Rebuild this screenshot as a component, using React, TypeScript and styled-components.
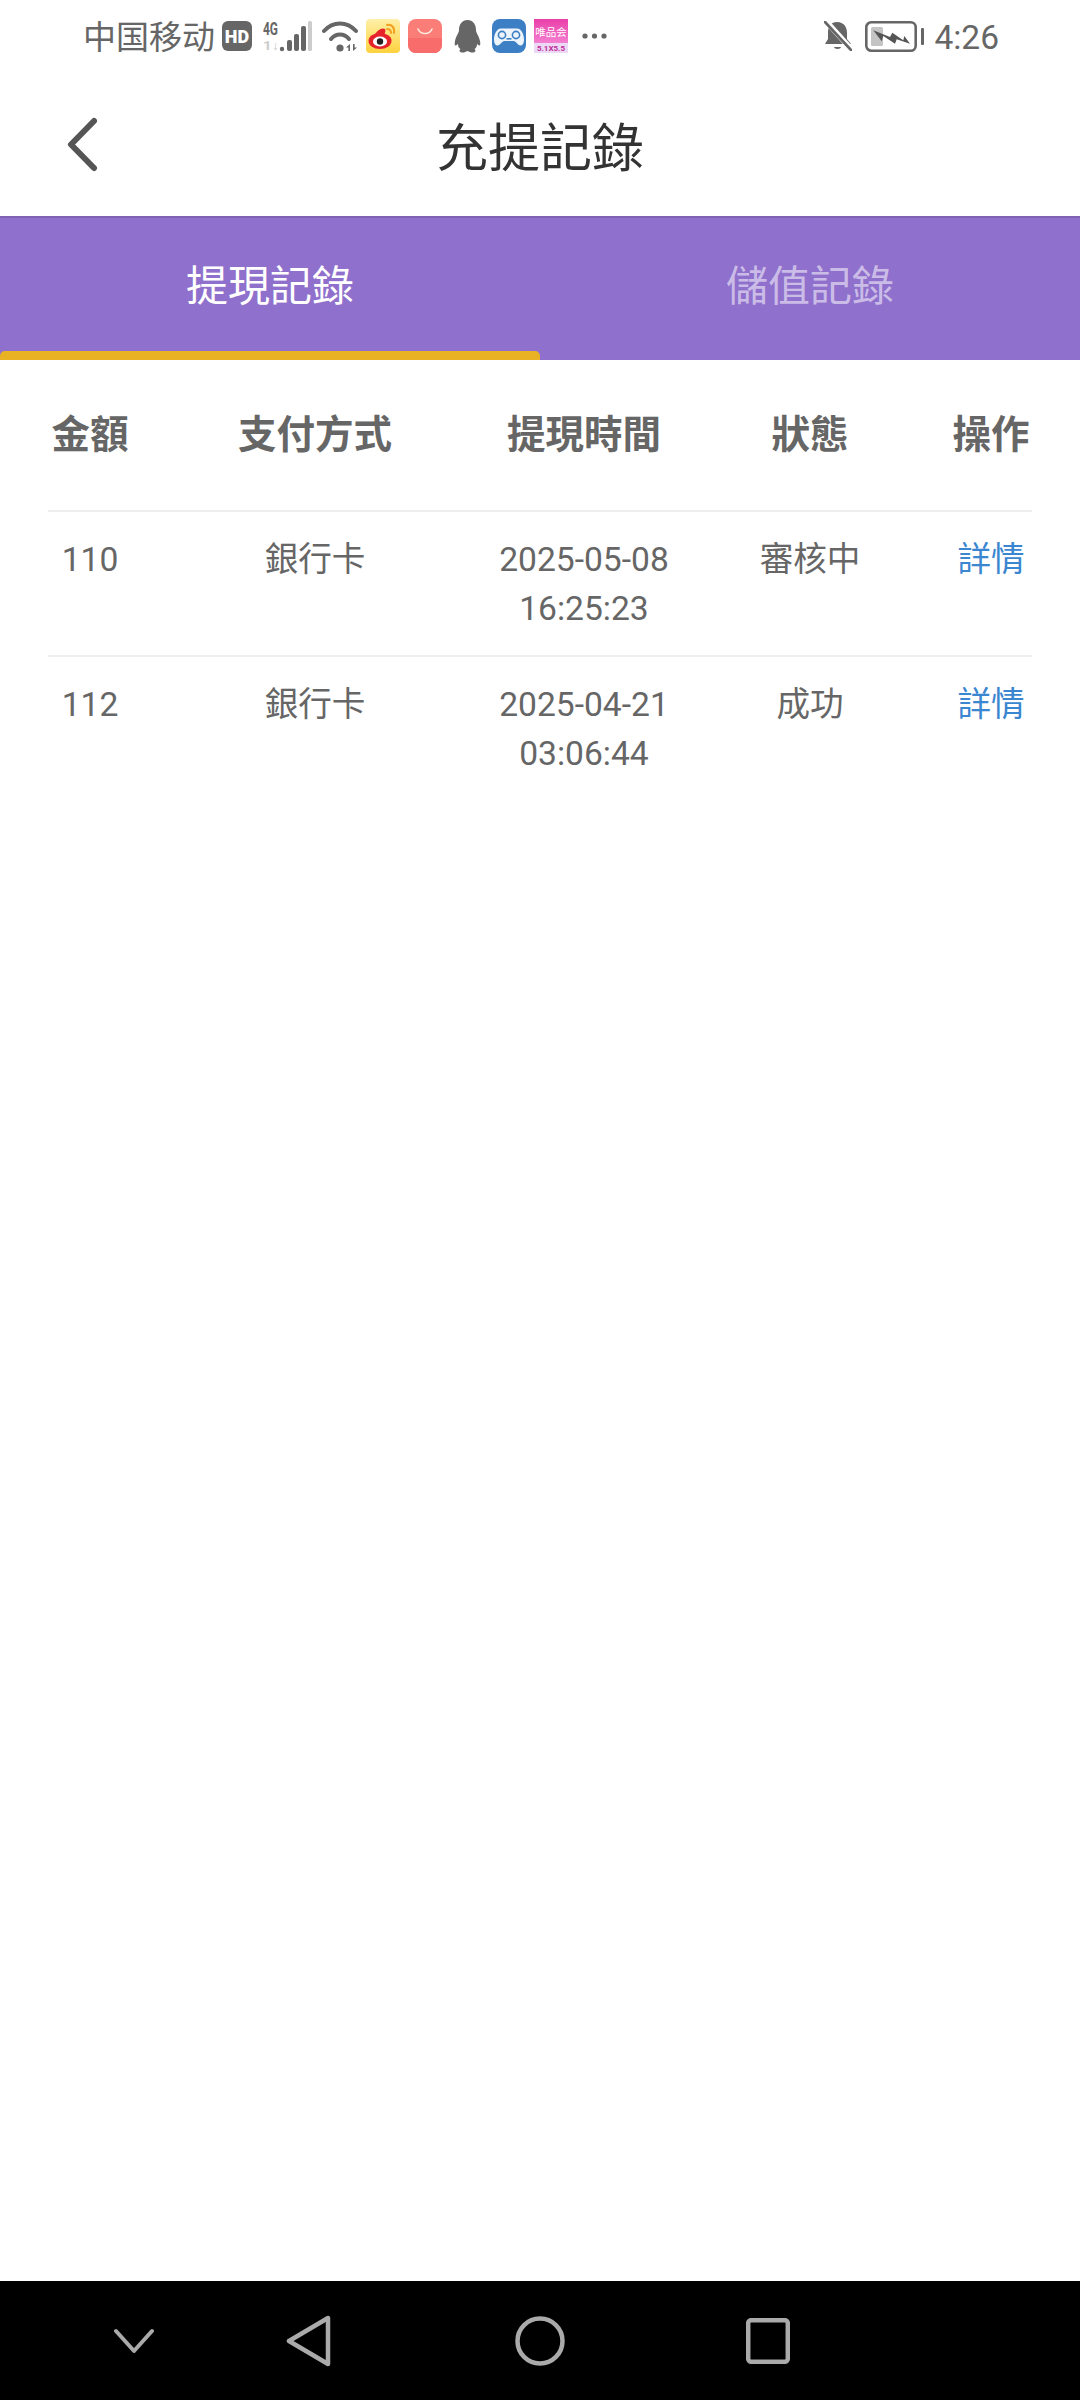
import React from 'react';
import styled, { createGlobalStyle } from 'styled-components';

const GlobalStyle = createGlobalStyle`
  html, body {
    margin: 0;
    padding: 0;
    background: #fff;
  }
  body {
    font-family: Roboto, 'Noto Sans CJK TC', sans-serif;
  }
`;

const Page = styled.div`
  display: flex;
  flex-direction: column;
  width: 1080px;
  height: 2400px;
  overflow: hidden;
  background: #fff;
`;

const StatusBar = styled.div`
  display: flex;
  align-items: center;
  justify-content: space-between;
  flex: none;
  box-sizing: border-box;
  height: 76px;
  padding: 0 81px 4px 83px;
  color: #666;
`;

const StatusGroup = styled.div`
  display: flex;
  align-items: center;
`;

const Carrier = styled.span`
  font-size: 33px;
  line-height: 40px;
  margin: 4px 7px 0 0;
`;

const Clock = styled.span`
  font-size: 33.5px;
  line-height: 40px;
  margin: 4px 0 0 10px;
`;

const Glyph = styled.svg<{ $gap?: number }>`
  display: block;
  flex: none;
  margin-left: ${({ $gap }) => $gap ?? 0}px;
`;

const Header = styled.header`
  display: flex;
  align-items: center;
  justify-content: center;
  position: relative;
  flex: none;
  box-sizing: border-box;
  height: 140px;
  padding-bottom: 4px;
`;

const BackButton = styled.button`
  position: absolute;
  left: 62px;
  top: 41px;
  padding: 0;
  border: 0;
  background: none;
`;

const Title = styled.h1`
  margin: 0;
  font-size: 52px;
  font-weight: 400;
  color: #333;
`;

const Tabs = styled.nav`
  display: flex;
  flex: none;
  height: 144px;
  background: #8f70cc;
  box-shadow: inset 0 2px 0 #7f64b4;
`;

const Tab = styled.div<{ $active?: boolean }>`
  display: flex;
  align-items: center;
  justify-content: center;
  position: relative;
  flex: 1;
  padding-bottom: 12px;
  font-size: 42px;
  color: ${({ $active }) => ($active ? '#fff' : 'rgba(255, 255, 255, 0.55)')};

  ${({ $active }) =>
    $active &&
    `
    &::after {
      content: '';
      position: absolute;
      left: 0;
      right: 0;
      bottom: 0;
      height: 9px;
      border-radius: 5px 5px 0 0;
      background: #e9b225;
    }
  `}
`;

const Table = styled.section`
  flex: 1;
  padding: 0 48px;
`;

const Row = styled.div`
  display: grid;
  grid-template-columns: 84px 366px 172px 280px 82px;
  border-bottom: 2px solid #eee;

  &:last-child {
    border-bottom: 0;
  }
`;

const HeadRow = styled(Row)`
  height: 152px;
  align-items: center;
  padding-bottom: 9px;
  box-sizing: border-box;
`;

const BodyRow = styled(Row)`
  height: 145px;
  box-sizing: border-box;
  padding-top: 23px;
`;

const HeadCell = styled.div`
  font-size: 38.5px;
  font-weight: 700;
  text-align: center;
  white-space: nowrap;
  color: #666;
`;

const Cell = styled.div<{ $link?: boolean }>`
  font-size: 33.6px;
  line-height: 49px;
  text-align: center;
  white-space: nowrap;
  color: ${({ $link }) => ($link ? '#3a86d0' : '#666')};
`;

const NavBar = styled.footer`
  display: flex;
  align-items: center;
  flex: none;
  height: 119px;
  padding: 0 0 0 114px;
  background: #000;
`;

const HdIcon = () => (
  <Glyph width="30" height="30" viewBox="0 0 30 30">
    <rect width="30" height="30" rx="6" fill="#666" />
    <text x="15" y="21.5" fontFamily="Roboto" fontSize="18" fontWeight="900" fill="#fff" textAnchor="middle">
      HD
    </text>
  </Glyph>
);

const SignalIcon = () => (
  <Glyph width="49" height="38" viewBox="0 -4 49 38" $gap={11}>
    <text x="0" y="14" fontFamily="Roboto" fontSize="18" fontWeight="700" fill="#666" textLength="15" lengthAdjust="spacingAndGlyphs">
      4G
    </text>
    <text x="0" y="29" fontFamily="Roboto" fontSize="12" fontWeight="700" fill="#ccc" textLength="16" lengthAdjust="spacingAndGlyphs">
      1↓
    </text>
    <circle cx="19" cy="28" r="2.2" fill="#666" />
    <rect x="24" y="19" width="5" height="11" rx="2" fill="#666" />
    <rect x="31" y="13" width="5" height="17" rx="2" fill="#666" />
    <rect x="38" y="5" width="5" height="25" rx="2" fill="#666" />
    <rect x="45" y="0" width="4" height="30" rx="1.5" fill="#ccc" />
  </Glyph>
);

const WifiIcon = () => (
  <Glyph width="36" height="34" viewBox="0 0 36 34" $gap={10}>
    <g fill="none" stroke="#666" strokeWidth="4" strokeLinecap="round">
      <path d="M2 12C11 2 25 2 34 12" />
      <path d="M9 20C14 14 22 14 27 20" />
    </g>
    <circle cx="18" cy="29" r="3.6" fill="#666" />
    <path d="M28 25v7h-1.6v-3.5h-2.4zM31 32v-7h1.6v3.5h2.4z" fill="#666" />
  </Glyph>
);

const WeiboIcon = () => (
  <Glyph width="34" height="34" viewBox="0 0 34 34" $gap={8}>
    <defs>
      <linearGradient id="weiboBg" x1="0" y1="0" x2="0" y2="1">
        <stop offset="0" stopColor="#fff0a8" />
        <stop offset="1" stopColor="#fdd23e" />
      </linearGradient>
    </defs>
    <rect width="34" height="34" rx="4" fill="url(#weiboBg)" />
    <ellipse cx="14" cy="22" rx="11.5" ry="8" fill="#e6232b" />
    <path d="M8 17c3-6 8-9 11-7 1 2 0 4-1 6z" fill="#e6232b" />
    <path d="M20 18c3-1 6 0 5 4l-5 2z" fill="#e6232b" />
    <ellipse cx="14" cy="22.5" rx="7" ry="5" fill="#fff" />
    <circle cx="14" cy="22.5" r="3.2" fill="#222" />
    <path d="M21 6c5-1 8 3 7 8M21 10c3 0 4 2 4 4" fill="none" stroke="#f2a020" strokeWidth="2" strokeLinecap="round" />
  </Glyph>
);

const BagIcon = () => (
  <Glyph width="34" height="34" viewBox="0 0 34 34" $gap={8}>
    <rect width="34" height="34" rx="8" fill="#fb7d78" />
    <path d="M0 19h34v7a8 8 0 0 1-8 8H8a8 8 0 0 1-8-8z" fill="#f96c6c" />
    <path d="M10 10c2.5 6 11.5 6 14 0" fill="none" stroke="#ffe9dc" strokeWidth="1.6" strokeLinecap="round" />
  </Glyph>
);

const PenguinIcon = () => (
  <Glyph width="29" height="33" viewBox="0 0 29 33" $gap={11}>
    <path
      d="M14.5 0c5.5 0 8.5 4.5 8.5 10 0 3 3 6 4 11 .6 3 .4 5-1 4.5l-2-1.500c0 3-1 4-2.500 5 1.500 1 1.500 3.500-2 3.500-2 0-3.500-.6-5-1.500-1.500.9-3 1.500-5 1.500-3.500 0-3.500-2.500-2-3.500C6 28 5 27 5 24l-2 1.500c-1.400.5-1.600-1.500-1-4.500 1-5 4-8 4-11C6 4.500 9 0 14.500 0z"
      fill="#666"
    />
  </Glyph>
);

const GamepadIcon = () => (
  <Glyph width="34" height="34" viewBox="0 0 34 34" $gap={10}>
    <rect width="34" height="34" rx="8" fill="#3d7fc4" />
    <path
      d="M9 9.5h16c4.500 0 7 6 7 11 0 4-1.500 6-3.500 6-3 0-4-4.500-7-4.500h-9c-3 0-4 4.500-7 4.500-2 0-3.500-2-3.500-6 0-5 2.500-11 7-11z"
      fill="#eef4fb"
    />
    <circle cx="10" cy="16" r="3.6" fill="none" stroke="#3d7fc4" strokeWidth="1.6" />
    <circle cx="24" cy="16" r="3.6" fill="none" stroke="#3d7fc4" strokeWidth="1.6" />
    <rect x="14.5" y="19" width="5" height="1.6" fill="#3d7fc4" />
  </Glyph>
);

const VipIcon = () => (
  <Glyph width="34" height="34" viewBox="0 0 34 34" $gap={8}>
    <defs>
      <linearGradient id="vipBg" x1="0" y1="0" x2="0" y2="1">
        <stop offset="0" stopColor="#e93fa8" />
        <stop offset="1" stopColor="#f47fd0" />
      </linearGradient>
    </defs>
    <rect width="34" height="24" fill="url(#vipBg)" />
    <rect y="24" width="34" height="10" fill="#ecd9f6" />
    <text x="17" y="17" fontFamily="'Noto Sans CJK SC'" fontSize="10.5" fill="#fff" textAnchor="middle">
      唯品会
    </text>
    <text x="17" y="32" fontFamily="Roboto" fontSize="8" fontWeight="700" fill="#c02a96" textAnchor="middle">
      5.1X5.5
    </text>
  </Glyph>
);

const MoreIcon = () => (
  <Glyph width="25" height="8" viewBox="0 0 25 8" $gap={14}>
    <circle cx="3" cy="4" r="2.6" fill="#666" />
    <circle cx="12.5" cy="4" r="2.6" fill="#666" />
    <circle cx="22" cy="4" r="2.6" fill="#666" />
  </Glyph>
);

const MutedBellIcon = () => (
  <Glyph width="28" height="30" viewBox="0 0 28 30">
    <path d="M13 1c7 0 10 5 10 11v6l4 5H1l3-5v-6c0-6 2-11 9-11z" fill="#666" />
    <path d="M10 26h7c0 2.5-7 2.5-7 0z" fill="#666" />
    <path d="M1 -1l26 29" stroke="#fff" strokeWidth="5.5" />
    <path d="M1 1l26 28" stroke="#666" strokeWidth="2.6" strokeLinecap="round" />
  </Glyph>
);

const BatteryIcon = () => (
  <Glyph width="59" height="31" viewBox="0 0 59 31" $gap={13}>
    <rect x="1.3" y="1.3" width="49.4" height="28.4" rx="5" fill="none" stroke="#666" strokeWidth="2.6" />
    <rect x="6" y="6" width="12" height="19" rx="1.5" fill="#c4c4c4" />
    <rect x="56" y="7" width="3" height="17" rx="1" fill="#666" />
    <path d="M8.3 9.3L25 16l2.3-4.3L38.3 19.3l1-4.3L45 22.7 31.7 18.3 30 22.7 18.3 15l-1.6 5.3z" fill="#555" />
  </Glyph>
);

const BackIcon = () => (
  <Glyph width="40" height="56" viewBox="0 0 40 56">
    <path d="M32 4L9 27.5 32 51" fill="none" stroke="#555" strokeWidth="6" strokeLinecap="round" strokeLinejoin="round" />
  </Glyph>
);

const HideKeysIcon = () => (
  <Glyph width="40" height="26" viewBox="0 0 40 26">
    <path d="M2 3l18 20L38 3" fill="none" stroke="#aaa" strokeWidth="4" strokeLinecap="round" strokeLinejoin="round" />
  </Glyph>
);

const BackKeyIcon = () => (
  <Glyph width="46" height="52" viewBox="0 0 46 52" $gap={132}>
    <path d="M42 3v46L3 26z" fill="none" stroke="#aaa" strokeWidth="4.5" strokeLinejoin="round" />
  </Glyph>
);

const HomeKeyIcon = () => (
  <Glyph width="50" height="50" viewBox="0 0 50 50" $gap={183}>
    <circle cx="25" cy="25" r="22.5" fill="none" stroke="#aaa" strokeWidth="4.5" />
  </Glyph>
);

const RecentKeyIcon = () => (
  <Glyph width="44" height="46" viewBox="0 0 44 46" $gap={181}>
    <rect x="2.2" y="2.2" width="39.6" height="41.6" rx="3" fill="none" stroke="#aaa" strokeWidth="4.5" />
  </Glyph>
);

const columns = ['金額', '支付方式', '提現時間', '狀態', '操作'];

const records = [
  { amount: '110', method: '銀行卡', date: '2025-05-08', time: '16:25:23', status: '審核中' },
  { amount: '112', method: '銀行卡', date: '2025-04-21', time: '03:06:44', status: '成功' },
];

const App = () => (
  <Page>
    <GlobalStyle />
    <StatusBar>
      <StatusGroup>
        <Carrier>中国移动</Carrier>
        <HdIcon />
        <SignalIcon />
        <WifiIcon />
        <WeiboIcon />
        <BagIcon />
        <PenguinIcon />
        <GamepadIcon />
        <VipIcon />
        <MoreIcon />
      </StatusGroup>
      <StatusGroup>
        <MutedBellIcon />
        <BatteryIcon />
        <Clock>4:26</Clock>
      </StatusGroup>
    </StatusBar>
    <Header>
      <BackButton>
        <BackIcon />
      </BackButton>
      <Title>充提記錄</Title>
    </Header>
    <Tabs>
      <Tab $active>提現記錄</Tab>
      <Tab>儲值記錄</Tab>
    </Tabs>
    <Table>
      <HeadRow>
        {columns.map((name) => (
          <HeadCell key={name}>{name}</HeadCell>
        ))}
      </HeadRow>
      {records.map((record) => (
        <BodyRow key={record.date}>
          <Cell>{record.amount}</Cell>
          <Cell>{record.method}</Cell>
          <Cell>
            {record.date}
            <br />
            {record.time}
          </Cell>
          <Cell>{record.status}</Cell>
          <Cell $link>詳情</Cell>
        </BodyRow>
      ))}
    </Table>
    <NavBar>
      <HideKeysIcon />
      <BackKeyIcon />
      <HomeKeyIcon />
      <RecentKeyIcon />
    </NavBar>
  </Page>
);

export default App;
